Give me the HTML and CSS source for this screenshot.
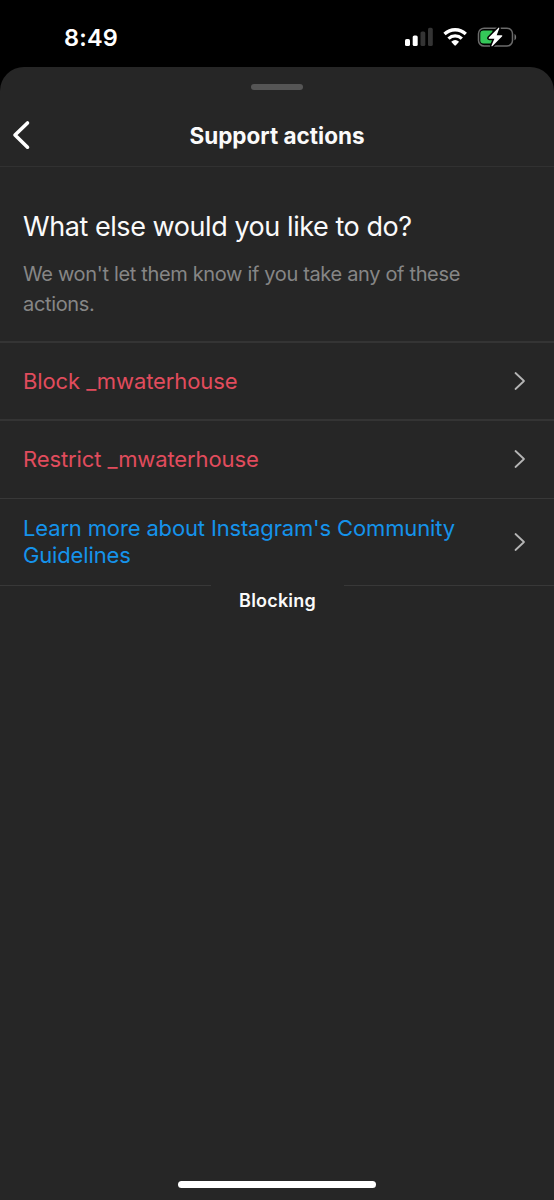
FILE: index.html
```html
<!DOCTYPE html>
<html lang="en">
<head>
<meta charset="utf-8">
<title>Support actions</title>
<link rel="stylesheet" href="styles.css">
</head>
<body>
<div class="screen">
  <div class="status">
    <div class="time">8:49</div>
    <svg class="status-icons" width="114" height="24" viewBox="0 0 114 24">
      <g fill="#fff"><rect x="1" y="14" width="5" height="7" rx="1.6"/><rect x="8.7" y="10.500" width="5" height="10.5" rx="1.6"/></g>
      <g fill="#343434"><rect x="16.5" y="6.500" width="4.8" height="14.5" rx="1.6"/><rect x="24" y="2.8" width="4.8" height="18.2" rx="1.6"/></g>
      <g fill="none" stroke="#fff" stroke-width="3.3"><path d="M40.5 9a15.5 15.5 0 0 1 21.3 0"/><path d="M44.5 13.600a9.7 9.7 0 0 1 13.3 0"/></g>
      <path fill="#fff" d="M47.2 16.700a6 6 0 0 1 7.9 0l-3.2 3.5a1 1 0 0 1-1.5 0z"/>
      <rect x="74.5" y="3.2" width="34" height="17.8" rx="5.6" fill="none" stroke="#6b6b6b" stroke-width="1.5"/>
      <path fill="#777" d="M110.500 9c2.200 1 2.200 5.300 0 6.300z"/>
      <path fill="#34c759" d="M79.500 5.500h9v13h-9a3.200 3.200 0 0 1-3.200-3.200V8.700A3.200 3.200 0 0 1 79.500 5.500z"/>
      <path fill="#fff" stroke="#000" stroke-width="3" paint-order="stroke" stroke-linejoin="round" d="M94.500 2.700 84.800 12.500q-.7 1.200.6 1.200h5l-3 7q0 .9.900.5L98.200 11.300q.6-1.100-.7-1.100h-4.800l2.600-7q0-1-.8-.5z"/>
    </svg>
  </div>
  <main class="sheet">
    <header class="header">
      <div class="grabber"></div>
      <svg class="back" width="20" height="30" viewBox="0 0 20 30"><path d="M16.500 3 4 15 16.500 27.200" fill="none" stroke="#fff" stroke-width="3.600" stroke-linecap="round" stroke-linejoin="round"/></svg>
      <h1 class="title">Support actions</h1>
    </header>
    <section class="intro">
      <h2 class="question">What else would you like to do?</h2>
      <p class="note">We won't let them know if you take any of these<br>actions.</p>
    </section>
    <div class="row danger"><span>Block _mwaterhouse</span><svg class="chevron" width="14" height="22" viewBox="0 0 14 22"><path d="m2.500 3 8.500 8-8.500 8"/></svg></div>
    <div class="row danger restrict"><span>Restrict _mwaterhouse</span><svg class="chevron" width="14" height="22" viewBox="0 0 14 22"><path d="m2.500 3 8.500 8-8.500 8"/></svg></div>
    <div class="row learn"><span>Learn more about Instagram's Community<br>Guidelines</span><svg class="chevron" width="14" height="22" viewBox="0 0 14 22"><path d="m2.500 3 8.500 8-8.500 8"/></svg>
      <div class="toast">Blocking</div>
    </div>
    <div class="home"></div>
  </main>
</div>
</body>
</html>
```
FILE: styles.css
```css
* { box-sizing: border-box; }
body { margin: 0; background: #000; font-family: Inter, sans-serif; }
.screen { width: 554px; height: 1200px; display: flex; flex-direction: column; overflow: hidden; }
.status { height: 67px; flex: none; display: flex; justify-content: space-between; padding: 24px 36px 0 64px; color: #fff; }
.time { font-size: 23.500px; line-height: 28px; font-weight: 600; letter-spacing: 0.2px; }
.status-icons { display: block; margin-top: 1px; }
.sheet { flex: 1; background: #262626; border-radius: 24px 24px 0 0; display: flex; flex-direction: column; }
.header { height: 100px; flex: none; border-bottom: 1px solid #313131; display: grid; grid-template-columns: 60px 1fr 60px; grid-template-rows: 37px 62px; align-items: center; }
.grabber { grid-column: 1 / 4; justify-self: center; align-self: start; margin-top: 17px; width: 52px; height: 6px; border-radius: 3px; background: #555; }
.back { margin-left: 11px; }
.title { margin: 0; padding-top: 1px; text-align: center; font-size: 22.500px; line-height: 28px; font-weight: 700; color: #fafafa; letter-spacing: 0; white-space: nowrap; }
.intro { height: 174px; flex: none; padding: 43px 23px 0; white-space: nowrap; }
.question { margin: 0; font-size: 27px; line-height: 34px; font-weight: 400; color: #fafafa; letter-spacing: -0.440px; }
.note { margin: 15px 0 0; font-size: 20px; line-height: 30px; color: #868686; letter-spacing: -0.340px; }
.row { height: 78px; flex: none; border-top: 2px solid #343434; padding: 0 27px 0 23px; display: flex; align-items: center; justify-content: space-between; font-size: 22px; line-height: 27px; letter-spacing: -0.100px; white-space: nowrap; }
.danger { color: #e14c5d; }
.restrict { height: 79px; padding-bottom: 1px; }
.learn { height: 88px; border-top: 1px solid #383838; border-bottom: 1px solid #383838; color: #1593eb; letter-spacing: -0.150px; position: relative; }
.chevron { fill: none; stroke: #b5b5b5; stroke-width: 1.800; stroke-linecap: round; stroke-linejoin: round; }
.toast { position: absolute; left: 211px; top: 85px; width: 133px; height: 34px; background: #262626; color: #fafafa; font-size: 18px; line-height: 34px; font-weight: 600; letter-spacing: 0.200px; text-align: center; }
.home { width: 198px; height: 7px; border-radius: 4px; background: #fff; margin: auto auto 12px; }
```
